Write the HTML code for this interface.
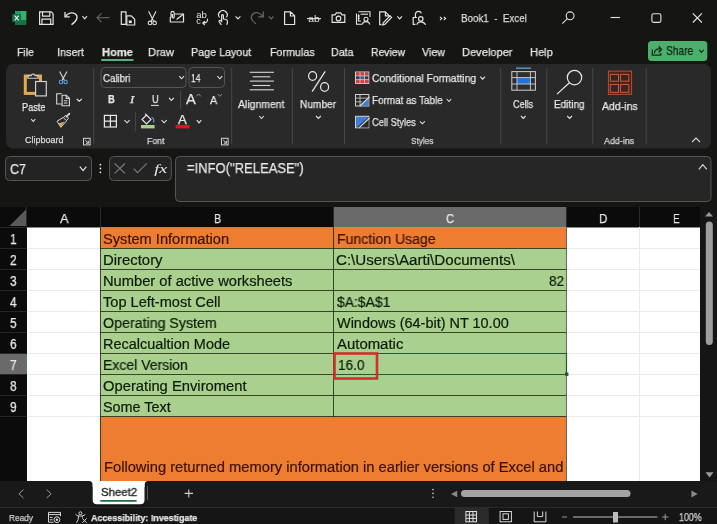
<!DOCTYPE html>
<html><head><meta charset="utf-8"><style>
html,body{margin:0;padding:0;width:717px;height:524px;overflow:hidden;background:#151513;}
body{position:relative;font-family:"Liberation Sans", sans-serif;}
svg.g{position:absolute;left:0;top:0;will-change:transform;}
.t{position:absolute;line-height:1;white-space:pre;transform-origin:0 0;will-change:transform;-webkit-text-stroke:0.25px currentColor;}
</style></head><body>
<svg class="g" width="717" height="524" viewBox="0 0 717 524">
<g>
<rect x="15" y="11" width="11.2" height="13.8" rx="0.8" fill="#1d8450"/>
<rect x="15" y="11" width="11.2" height="4.6" fill="#2a9a62"/>
<rect x="20.5" y="11" width="5.7" height="9.2" fill="#33b070"/>
<rect x="15" y="20.2" width="11.2" height="4.6" fill="#1b6e44"/>
<rect x="12.2" y="14" width="8.9" height="8" rx="0.8" fill="#17744a"/>
<path d="M14.7 15.6 L18.7 20.4 M18.7 15.6 L14.7 20.4" stroke="#e8f5ec" stroke-width="1.2"/>
</g>
<g fill="none" stroke="#e3e3e3" stroke-width="1.2"><path d="M39.6 11.8 H51.2 L53.1 13.7 V24.4 H39.6 Z"/><path d="M42.5 11.8 V16.2 H49.8 V11.8"/><path d="M42 24.4 V19.2 H50.7 V24.4"/></g>
<g fill="none" stroke="#e3e3e3" stroke-width="1.3"><path d="M65 12 V16.8 H69.8"/><path d="M65.3 16.6 C67.5 13.2 72 11.8 75 13.8 C78.3 16 77.8 20.5 71.5 24.6"/></g>
<path d="M82.5 16.2 L84.75 18.8 L87 16.2" fill="none" stroke="#e3e3e3" stroke-width="1.1"/>
<g fill="none" stroke="#6a6a6a" stroke-width="1.1"><path d="M97 17.7 H109.5"/><path d="M101.5 13.3 L97 17.7 L101.5 22.2"/></g>
<g fill="none" stroke="#e3e3e3" stroke-width="1.2"><path d="M121.3 11.8 H126 V24.4 H121.3 Z"/><path d="M126.8 15.8 H131.2 L134.7 19.3 V25 H126.8 Z"/></g><rect x="128.8" y="20.5" width="3" height="2.6" fill="#e3e3e3"/>
<g fill="none" stroke="#e3e3e3" stroke-width="1.1"><path d="M148.6 11.3 L153.6 21.2 M156 11.3 L151 21.2"/><circle cx="150" cy="22.9" r="1.8"/><circle cx="154.6" cy="22.9" r="1.8"/></g>
<g fill="none" stroke="#e3e3e3" stroke-width="1.2"><path d="M175 14 H183.5 V22 H170.3 V17"/><path d="M176.6 19.5 L183.2 14.2"/><path d="M171 17.5 V13 A1.6 1.6 0 0 1 174.2 13 V17 A0.9 0.9 0 0 1 172.4 17 V14"/></g>
<text x="196.3" y="17.6" font-family="Liberation Sans" font-size="8.4" fill="#e3e3e3" textLength="10.6" lengthAdjust="spacingAndGlyphs">ab</text><text x="196.2" y="24.2" font-family="Liberation Sans" font-size="9" fill="#e3e3e3">c</text><path d="M207.6 18.6 C207.8 21.6 206.2 23.1 202.8 23.1 M204.8 21.1 L202.7 23.1 L204.8 25" fill="none" stroke="#e3e3e3" stroke-width="1.1"/>
<g fill="none" stroke="#e3e3e3" stroke-width="1.2"><path d="M219.5 17.5 A4.3 4.3 0 1 1 226.3 17.5"/><path d="M221.4 24.8 L219.2 21.8 C218.6 20.8 219.8 19.8 220.8 20.7 L221.6 21.4 V15.5 C221.6 14.3 223.4 14.3 223.4 15.5 V19 C225.5 19 227.4 19.6 227.4 21.3 V23 L226.6 24.8"/></g>
<path d="M235.6 16.4 L238.0 18.9 L240.4 16.4" fill="none" stroke="#e3e3e3" stroke-width="1.1"/>
<g fill="none" stroke="#6a6a6a" stroke-width="1.2"><path d="M263.3 11.5 V16.8 H258.3"/><path d="M263 16.5 C260.8 13 256 11.5 253.2 13.8 C250 16.3 250.6 20.3 256 23.8"/></g>
<path d="M268.8 16.4 L271.15 18.9 L273.5 16.4" fill="none" stroke="#6a6a6a" stroke-width="1.1"/>
<path d="M284.6 11.8 H290.6 L294.6 15.8 V24.5 H284.6 Z M290.4 11.8 V16 H294.6" fill="none" stroke="#e3e3e3" stroke-width="1.2"/>
<text x="308.2" y="22.2" font-family="Liberation Sans" font-size="9.6" fill="#e3e3e3" textLength="11.5" lengthAdjust="spacingAndGlyphs">ab</text><path d="M307 18.6 H321" stroke="#e3e3e3" stroke-width="1.1"/>
<g fill="none" stroke="#e3e3e3" stroke-width="1.2"><path d="M332.1 14.8 H335 L336.4 12.9 H340.6 L342 14.8 H344.8 V22.4 H332.1 Z"/><circle cx="338.5" cy="18.5" r="2.3"/></g>
<g fill="none" stroke="#e3e3e3" stroke-width="1.1"><path d="M356.5 13.5 V24.3 H362"/><path d="M358.5 11.8 H370 V17"/><path d="M358.5 14.2 V21 H361"/><path d="M360.6 14.2 H368"/><circle cx="366" cy="19.3" r="2"/><path d="M362.3 24.5 C362.6 22.6 364 21.6 366 21.6 C368 21.6 369.5 22.6 369.8 24.5"/></g><path d="M357.8 16 H360 M357.8 18.2 H360" stroke="#e3e3e3" stroke-width="1"/>
<g fill="none" stroke="#e3e3e3" stroke-width="1.2"><path d="M381.5 24.6 H379.7 V11.8 H385.3 L389.2 15.7 V17"/><path d="M385.4 11.8 V15.8 H389.3"/><path d="M391.6 17.4 L384.8 24.5 L382.7 25 L383.3 22.9 L390.1 15.9 Z"/></g>
<path d="M397.3 16.4 L399.65 18.9 L402 16.4" fill="none" stroke="#e3e3e3" stroke-width="1.1"/>
<g fill="none" stroke="#e3e3e3" stroke-width="1.2"><path d="M415.4 17.3 V14.4 A3.1 3.1 0 0 1 421.4 13.4"/><path d="M417 17.5 H413.2 V24.4 H415.5"/><circle cx="420.8" cy="18.9" r="2.2"/><path d="M417 24.8 C417.2 22.9 418.7 21.8 420.8 21.8 C422.9 21.8 424.5 22.9 425.6 24.8"/></g>
<path d="M440 17 L441.8 18.6 L440 20.2 M443.8 17 L445.6 18.6 L443.8 20.2" fill="none" stroke="#e3e3e3" stroke-width="1.1"/>
<g fill="none" stroke="#e3e3e3" stroke-width="1.1"><circle cx="570.1" cy="15.8" r="3.9"/><path d="M567.3 18.7 L562.3 23.6"/></g>
<path d="M610.6 17.5 H620" stroke="#e3e3e3" stroke-width="1.1"/>
<rect x="651.9" y="13.8" width="9" height="8.6" rx="1.6" fill="none" stroke="#e3e3e3" stroke-width="1.1"/>
<path d="M692.8 13.4 L701.9 22.5 M701.9 13.4 L692.8 22.5" stroke="#e3e3e3" stroke-width="1.1"/>
<rect x="101" y="59" width="32.7" height="1.9" rx="0.9" fill="#5cb07c"/>
<rect x="648" y="41" width="59.3" height="20" rx="3.5" fill="#4caf6c"/>
<g fill="none" stroke="#0d2a16" stroke-width="1.2"><path d="M652.3 49.5 V55.2 H660.8 V53"/><path d="M654.3 53.4 C654.7 50.2 656.6 48.8 659.3 48.8 V46.9 L661.6 49.5 L659.3 52 V50.3"/></g>
<path d="M699.2 49.8 L701.4000000000001 52.4 L703.6 49.8" fill="none" stroke="#0d2a16" stroke-width="1.1"/>
<rect x="6" y="64" width="705" height="84.5" rx="7" fill="#292929"/>
<path d="M93.7 68 V144" stroke="#474747" stroke-width="1"/>
<path d="M231.7 68 V144" stroke="#474747" stroke-width="1"/>
<path d="M292.4 68 V144" stroke="#474747" stroke-width="1"/>
<path d="M344.5 68 V144" stroke="#474747" stroke-width="1"/>
<path d="M500.7 68 V144" stroke="#474747" stroke-width="1"/>
<path d="M546.9 68 V144" stroke="#474747" stroke-width="1"/>
<path d="M592.7 68 V144" stroke="#474747" stroke-width="1"/>
<path d="M646.2 68 V144" stroke="#474747" stroke-width="1"/>
<g><rect x="25.3" y="76" width="15.2" height="17.4" fill="none" stroke="#e3a94a" stroke-width="3"/><path d="M27.8 78.2 L28.4 75.6 H31.1 A2.1 2.1 0 0 1 35.1 75.6 H37.7 L38.2 78.2 Z" fill="#292929" stroke="#cfcfcf" stroke-width="1.1"/><rect x="35.6" y="81.5" width="10.7" height="14.4" fill="#292929" stroke="#d0d0d0" stroke-width="1.2"/></g>
<path d="M31.2 119.2 L33.25 121.5 L35.3 119.2" fill="none" stroke="#e3e3e3" stroke-width="1.1"/>
<g fill="none" stroke-width="1.1"><path d="M59.6 71.6 L64.5 80.6 M67 71.6 L62 80.6" stroke="#d8d8d8"/><circle cx="61" cy="82" r="1.7" stroke="#5a9fd8"/><circle cx="65.6" cy="82" r="1.7" stroke="#5a9fd8"/></g>
<g fill="none" stroke="#d8d8d8" stroke-width="1.1"><path d="M61.8 104 H56.7 V93.8 H61.8"/><path d="M62.1 95.2 H66.4 L69.4 98.2 V105.8 H62.1 Z"/><path d="M66.2 95.2 V98.4 H69.4"/><path d="M63.9 100.8 H67.4 M63.9 103 H67.4"/></g>
<path d="M76.7 99 L79.25 101.2 L81.8 99" fill="none" stroke="#e3e3e3" stroke-width="1.1"/>
<g><path d="M57 121.3 L63.2 117.4 L66.6 120.8 L60.9 127.3 Z" fill="#292929" stroke="#dcdcdc" stroke-width="1"/><path d="M58.6 123.4 L64.7 121.6 L60.9 126.4 Z" fill="#e8b24a"/><path d="M63.4 117.6 L65.6 115.4 L68.6 118.4 L66.4 120.6" fill="none" stroke="#dcdcdc" stroke-width="1"/><path d="M66.4 116.6 L69.4 113.6" stroke="#dcdcdc" stroke-width="1.6" stroke-linecap="round"/></g>
<g fill="none" stroke="#d4d4d4" stroke-width="1"><rect x="83.5" y="138.3" width="6.6" height="6.6"/><path d="M85.2 140.0 L88.4 143.20000000000002 M88.4 140.8 V143.20000000000002 H86"/></g>
<rect x="101" y="67.5" width="85" height="20" rx="4" fill="none" stroke="#555" stroke-width="1"/>
<rect x="189" y="67.5" width="35.5" height="20" rx="4" fill="none" stroke="#555" stroke-width="1"/>
<path d="M179.2 76.2 L181.6 78.8 L184 76.2" fill="none" stroke="#e3e3e3" stroke-width="1.1"/>
<path d="M217.4 76.2 L219.8 78.8 L222.2 76.2" fill="none" stroke="#e3e3e3" stroke-width="1.1"/>
<path d="M151 105.4 H158.8" stroke="#e8e8e8" stroke-width="1"/>
<path d="M169 97.8 L171.4 100.4 L173.8 97.8" fill="none" stroke="#e3e3e3" stroke-width="1.1"/>
<path d="M180.5 90.5 V109" stroke="#474747" stroke-width="1"/>
<path d="M196.4 96.3 L198.6 94 L200.8 96.3" fill="none" stroke="#5a9fd8" stroke-width="1"/>
<path d="M217.6 94 L219.8 96.3 L222 94" fill="none" stroke="#5a9fd8" stroke-width="1"/>
<g fill="none" stroke="#e8e8e8" stroke-width="1.2"><rect x="104.4" y="115.4" width="12" height="11.6"/><path d="M110.4 115.4 V127 M104.4 121.2 H116.4"/></g>
<path d="M124.5 120.2 L127.05 122.8 L129.6 120.2" fill="none" stroke="#e3e3e3" stroke-width="1.1"/>
<path d="M135.6 112 V131.4" stroke="#474747" stroke-width="1"/>
<g fill="none" stroke="#e8e8e8" stroke-width="1.1"><path d="M142 119.5 L146.5 115 L151 119.5 L146.5 124 Z"/><path d="M145 113.6 L147.3 115.8"/></g><path d="M151.5 117.3 C153.5 118 154.6 120.5 153.4 122.3" fill="none" stroke="#5a9fd8" stroke-width="1.2"/>
<rect x="141" y="125" width="13.6" height="3.4" fill="#a9d08e"/>
<path d="M161.6 120.2 L164.14999999999998 122.8 L166.7 120.2" fill="none" stroke="#e3e3e3" stroke-width="1.1"/>
<rect x="175.6" y="125" width="14" height="3.4" fill="#e0141a"/>
<path d="M196.8 120.2 L199.05 122.8 L201.3 120.2" fill="none" stroke="#e3e3e3" stroke-width="1.1"/>
<g fill="none" stroke="#d4d4d4" stroke-width="1"><rect x="221.5" y="138.3" width="6.6" height="6.6"/><path d="M223.2 140.0 L226.4 143.20000000000002 M226.4 140.8 V143.20000000000002 H224"/></g>
<path d="M249.8 72.3 H273.9" stroke="#d8d8d8" stroke-width="1.1"/>
<path d="M252.6 76.8 H270.2" stroke="#d8d8d8" stroke-width="1.1"/>
<path d="M249.8 81.1 H273.9" stroke="#d8d8d8" stroke-width="1.1"/>
<path d="M252.6 85.5 H270.2" stroke="#d8d8d8" stroke-width="1.1"/>
<path d="M249.8 89.8 H273.9" stroke="#d8d8d8" stroke-width="1.1"/>
<path d="M259.2 116 L261.5 118.5 L263.8 116" fill="none" stroke="#e3e3e3" stroke-width="1.1"/>
<g fill="none" stroke="#e8e8e8" stroke-width="1.2"><ellipse cx="312.6" cy="76" rx="4" ry="4.4"/><ellipse cx="324.6" cy="87" rx="4" ry="4.4"/><path d="M325.2 71.4 L312.1 91.6"/></g>
<path d="M316 116 L318.4 118.5 L320.8 116" fill="none" stroke="#e3e3e3" stroke-width="1.1"/>
<g><rect x="355.5" y="72" width="13.3" height="11.4" fill="#3a3a3a" stroke="#cfcfcf" stroke-width="1"/><rect x="356" y="72.5" width="12.3" height="3.4" fill="#d04040"/><rect x="356" y="79.6" width="12.3" height="3.4" fill="#d04040"/><rect x="360.3" y="75.9" width="4" height="3.7" fill="#3a5fa8"/><path d="M360 72 V83.4 M364.5 72 V83.4 M355.5 75.9 H368.8 M355.5 79.6 H368.8" stroke="#cfcfcf" stroke-width="0.8"/></g>
<path d="M480.3 76.6 L482.65 79.1 L485 76.6" fill="none" stroke="#e3e3e3" stroke-width="1.1"/>
<g><rect x="355.5" y="94.5" width="13.3" height="11.5" fill="none" stroke="#cfcfcf" stroke-width="1"/><path d="M355.5 98.1 H368.8 M355.5 101.8 H362 M360 94.5 V106.0" stroke="#cfcfcf" stroke-width="0.8"/><path d="M360.5 105.7 L368.6 98.0 V105.7 Z" fill="#3f7fd0"/><path d="M359.8 106.0 L369.5 96.8" stroke="#e0e0e0" stroke-width="1.1"/></g>
<path d="M446.8 99 L449.0 101.5 L451.2 99" fill="none" stroke="#e3e3e3" stroke-width="1.1"/>
<g><rect x="355.5" y="116.3" width="13.3" height="11.5" fill="#3f7fd0" stroke="#cfcfcf" stroke-width="1"/><path d="M357 127.5 L368.6 117 V127.5 Z" fill="#2a2a2a"/><path d="M359 127.8 L369.5 118" stroke="#e0e0e0" stroke-width="1.1"/></g>
<path d="M420 121.3 L422.4 123.8 L424.8 121.3" fill="none" stroke="#e3e3e3" stroke-width="1.1"/>
<g><path d="M516 68.2 H531" stroke="#5a9fd8" stroke-width="1.4"/><rect x="511.8" y="71.6" width="23.6" height="18.6" fill="#2f2f2f" stroke="#cfcfcf" stroke-width="1"/><rect x="517" y="77.6" width="13.4" height="6.4" fill="#1e73d8"/><path d="M511.8 77.6 H535.4 M511.8 84 H535.4 M517 71.6 V90.2 M530.4 71.6 V90.2" stroke="#cfcfcf" stroke-width="0.9"/></g>
<path d="M521 116 L523.3 118.4 L525.6 116" fill="none" stroke="#e3e3e3" stroke-width="1.1"/>
<g fill="none" stroke="#e8e8e8" stroke-width="1.2"><circle cx="574.5" cy="77.6" r="7.2"/><path d="M569.4 82.7 L557 94.1"/></g>
<path d="M567.2 116 L569.6 118.4 L572 116" fill="none" stroke="#e3e3e3" stroke-width="1.1"/>
<g stroke-width="1"><rect x="608.4" y="71.1" width="23.2" height="23.2" fill="#5a1c12" stroke="#b8502e"/><rect x="610.3" y="74.4" width="8.2" height="6.8" fill="#3a2420" stroke="#c2603c"/><rect x="620.6" y="74.4" width="8.2" height="6.8" fill="#3a2420" stroke="#c2603c"/><rect x="610.3" y="84.5" width="8.2" height="7.8" fill="#3a2420" stroke="#c2603c"/><rect x="620.6" y="84.5" width="8.2" height="7.8" fill="#3a2420" stroke="#c2603c"/></g>
<path d="M692 142 L696.0 138 L700 142" fill="none" stroke="#d8d8d8" stroke-width="1.1"/>
<rect x="5.5" y="156.5" width="86" height="24" rx="4" fill="#232323" stroke="#555" stroke-width="1"/>
<path d="M79.8 166.6 L83.1 170.6 L86.4 166.6" fill="none" stroke="#e3e3e3" stroke-width="1.2"/>
<g fill="#e8e8e8"><circle cx="100.4" cy="164.7" r="0.9"/><circle cx="100.4" cy="168.5" r="0.9"/><circle cx="100.4" cy="172.3" r="0.9"/></g>
<rect x="109.5" y="156.5" width="61.8" height="24" rx="4" fill="#232323" stroke="#555" stroke-width="1"/>
<g fill="none" stroke="#7a7a7a" stroke-width="1.1"><path d="M114.6 163.5 L125 173.4 M125 163.5 L114.6 173.4"/><path d="M133.8 168.6 L137.5 172.6 L146.8 163.4"/></g>
<text x="154.2" y="172.8" font-family="Liberation Serif" font-style="italic" font-size="12.5" fill="#e8e8e8" textLength="13" lengthAdjust="spacingAndGlyphs">fx</text>
<rect x="175.5" y="156.5" width="535.5" height="45" rx="4" fill="#262626" stroke="#555" stroke-width="1"/>
<path d="M698.8 169.4 L702.8 164.6 L706.8 169.4" fill="none" stroke="#d8d8d8" stroke-width="1.1"/>
<rect x="0" y="207" width="700" height="20.5" fill="#0b0b0b"/>
<rect x="333.5" y="207" width="233.5" height="20.5" fill="#6a6a6a"/>
<path d="M333.5 226.5 H567" stroke="#4f7f56" stroke-width="1"/>
<path d="M9.5 226 L26 209.6 V226 Z" fill="#5a5a5a"/>
<rect x="0" y="227" width="27" height="254" fill="#0b0b0b"/>
<rect x="0" y="354" width="27" height="21" fill="#6a6a6a"/>
<path d="M26.5 354 V375" stroke="#4f7f56" stroke-width="1"/>
<path d="M0 227.5 H27" stroke="#262626" stroke-width="1"/>
<path d="M0 248.5 H27" stroke="#262626" stroke-width="1"/>
<path d="M0 269.5 H27" stroke="#262626" stroke-width="1"/>
<path d="M0 290.5 H27" stroke="#262626" stroke-width="1"/>
<path d="M0 311.5 H27" stroke="#262626" stroke-width="1"/>
<path d="M0 332.5 H27" stroke="#262626" stroke-width="1"/>
<path d="M0 353.5 H27" stroke="#262626" stroke-width="1"/>
<path d="M0 374.5 H27" stroke="#262626" stroke-width="1"/>
<path d="M0 395.5 H27" stroke="#262626" stroke-width="1"/>
<path d="M0 416.5 H27" stroke="#262626" stroke-width="1"/>
<path d="M26.5 207 V227" stroke="#2a2a2a" stroke-width="1"/>
<path d="M100.5 207 V227" stroke="#2a2a2a" stroke-width="1"/>
<path d="M333.5 207 V227" stroke="#2a2a2a" stroke-width="1"/>
<path d="M566.5 207 V227" stroke="#2a2a2a" stroke-width="1"/>
<path d="M639.5 207 V227" stroke="#2a2a2a" stroke-width="1"/>
<rect x="27" y="227.5" width="673" height="253.5" fill="#ffffff"/>
<path d="M27 248.5 H700" stroke="#eaeaea" stroke-width="1"/>
<path d="M27 269.5 H700" stroke="#eaeaea" stroke-width="1"/>
<path d="M27 290.5 H700" stroke="#eaeaea" stroke-width="1"/>
<path d="M27 311.5 H700" stroke="#eaeaea" stroke-width="1"/>
<path d="M27 332.5 H700" stroke="#eaeaea" stroke-width="1"/>
<path d="M27 353.5 H700" stroke="#eaeaea" stroke-width="1"/>
<path d="M27 374.5 H700" stroke="#eaeaea" stroke-width="1"/>
<path d="M27 395.5 H700" stroke="#eaeaea" stroke-width="1"/>
<path d="M27 416.5 H700" stroke="#eaeaea" stroke-width="1"/>
<path d="M100.5 227 V481" stroke="#eaeaea" stroke-width="1"/>
<path d="M333.5 227 V481" stroke="#eaeaea" stroke-width="1"/>
<path d="M566.5 227 V481" stroke="#eaeaea" stroke-width="1"/>
<path d="M639.5 227 V481" stroke="#eaeaea" stroke-width="1"/>
<rect x="100.5" y="227.5" width="466" height="21" fill="#ed7d31"/>
<rect x="100.5" y="248.5" width="466" height="168" fill="#a9d08e"/>
<rect x="100.5" y="416.5" width="466" height="64.5" fill="#ed7d31"/>
<path d="M100.5 248.5 H566.5" stroke="rgba(10,20,0,0.72)" stroke-width="1"/>
<path d="M100.5 269.5 H566.5" stroke="rgba(10,20,0,0.72)" stroke-width="1"/>
<path d="M100.5 290.5 H566.5" stroke="rgba(10,20,0,0.72)" stroke-width="1"/>
<path d="M100.5 311.5 H566.5" stroke="rgba(10,20,0,0.72)" stroke-width="1"/>
<path d="M100.5 332.5 H566.5" stroke="rgba(10,20,0,0.72)" stroke-width="1"/>
<path d="M100.5 353.5 H566.5" stroke="rgba(10,20,0,0.72)" stroke-width="1"/>
<path d="M100.5 374.5 H566.5" stroke="rgba(10,20,0,0.72)" stroke-width="1"/>
<path d="M100.5 395.5 H566.5" stroke="rgba(10,20,0,0.72)" stroke-width="1"/>
<path d="M100.5 416.5 H566.5" stroke="rgba(10,20,0,0.72)" stroke-width="1"/>
<path d="M100.5 227 V481" stroke="rgba(10,10,0,0.72)" stroke-width="1"/>
<path d="M333.5 227 V417" stroke="rgba(10,30,0,0.75)" stroke-width="1"/>
<path d="M566.5 227 V481" stroke="rgba(70,70,70,0.75)" stroke-width="1"/>
<path d="M333.5 353.5 H566.5 V374.5 H333.5" fill="none" stroke="#1f5c36" stroke-width="1.2"/>
<rect x="565" y="372.5" width="3.4" height="3.4" fill="#1f5c36"/>
<rect x="334.5" y="353.5" width="42.5" height="25" fill="none" stroke="#d0302a" stroke-width="2.6"/>
<rect x="700" y="206.5" width="17" height="274.5" fill="#151515"/>
<path d="M705 216.5 L709 212 L713 216.5 Z" fill="#9a9a9a"/>
<rect x="705.8" y="221.6" width="7" height="123.4" rx="3.5" fill="#9e9e9e"/>
<path d="M705.5 472.2 L709.5 477.6 L713.5 472.2 Z" fill="#9a9a9a"/>
<rect x="86" y="481" width="64" height="6" fill="#ffffff"/>
<path d="M0 481 H88.7 A4 4 0 0 1 92.7 485 V507.5 H0 Z" fill="#19191a"/>
<path d="M144.5 485 A4 4 0 0 1 148.5 481 H717 V507.5 H144.5 Z" fill="#19191a"/>
<path d="M23.5 489.6 L18.9 493.8 L23.5 498" fill="none" stroke="#9a9a9a" stroke-width="1"/>
<path d="M46.6 489.6 L51.2 493.8 L46.6 498" fill="none" stroke="#9a9a9a" stroke-width="1"/>
<path d="M92.7 481 H144.5 V500 Q144.5 504.2 140.3 504.2 H96.9 Q92.7 504.2 92.7 500 Z" fill="#ffffff"/>
<rect x="100.3" y="500" width="36.3" height="1.8" fill="#217346"/>
<path d="M147.5 486 V500" stroke="#5a5a5a" stroke-width="1"/>
<path d="M184.6 493.4 H193 M188.8 489.4 V497.4" stroke="#cfcfcf" stroke-width="1.1"/>
<g fill="#cfcfcf"><circle cx="433" cy="489.6" r="0.8"/><circle cx="433" cy="493.4" r="0.8"/><circle cx="433" cy="497.2" r="0.8"/></g>
<path d="M457.2 490.7 L451 494 L457.2 497.3 Z" fill="#8a8a8a"/>
<rect x="461" y="490" width="169.5" height="7" rx="3.5" fill="#a3a3a3"/>
<path d="M691.4 490.4 L697.6 494 L691.4 497.4 Z" fill="#8a8a8a"/>
<rect x="0" y="507.5" width="717" height="16.5" fill="#151515"/>
<path d="M0 507.5 H717" stroke="#2a2a2a" stroke-width="1"/>
<g fill="none" stroke="#d8d8d8" stroke-width="1"><path d="M53.5 522.2 H48.5 V512.4 H60.5 V516.2 M48.5 514.6 H60.5 M49.8 517.4 H52.6 M49.8 519.8 H52.6"/><circle cx="56.9" cy="519.7" r="2.9"/></g><circle cx="56.9" cy="519.7" r="1.2" fill="#d8d8d8"/>
<g fill="none" stroke="#d8d8d8" stroke-width="1"><circle cx="80.4" cy="513.3" r="1.5"/><path d="M75.5 514.4 C77 515.6 78.6 516.1 80.4 516.1 C82.2 516.1 83.8 515.6 85.3 514.4"/><path d="M78.6 516 L78.1 519.6 L76.6 522.8 M82.2 516 L82.4 517.6"/><path d="M82.4 518.4 L86.6 522.8 M86.6 518.4 L82.4 522.8"/></g>
<rect x="454.6" y="508" width="34.2" height="16" fill="#2a2a2a"/>
<g fill="none" stroke="#e0e0e0" stroke-width="1"><rect x="465.9" y="511.5" width="10.6" height="10.3"/><path d="M469.4 511.5 V521.8 M473 511.5 V521.8 M465.9 515 H476.5 M465.9 518.4 H476.5"/></g>
<g fill="none" stroke="#d8d8d8" stroke-width="1"><rect x="500.1" y="511.5" width="11.3" height="10.3"/><rect x="503" y="513.8" width="5.4" height="5.6"/></g>
<g fill="none" stroke="#d8d8d8" stroke-width="1"><path d="M534.2 511.5 V521.8 H545.9 V511.5"/><path d="M537.4 511.5 V516.6 H542.7 V511.5"/></g>
<path d="M562 517 H567" stroke="#9a9a9a" stroke-width="1"/>
<path d="M573 517 H657.4" stroke="#bdbdbd" stroke-width="1"/>
<rect x="613" y="512" width="5" height="10.5" fill="#bdbdbd"/>
<path d="M662 517 H668.4 M665.2 513.8 V520.2" stroke="#9a9a9a" stroke-width="1"/>
</svg>
<span class="t" style="left:460.60px;top:12.00px;font-size:11.63px;color:#dcdcdc;transform:scaleX(0.841);white-space:pre;">Book1  -  Excel</span>
<span class="t" style="left:17.00px;top:46.00px;font-size:11.63px;color:#e8e8e8;transform:scaleX(0.901);">File</span>
<span class="t" style="left:56.50px;top:46.00px;font-size:11.63px;color:#e8e8e8;transform:scaleX(0.932);">Insert</span>
<span class="t" style="left:101.70px;top:46.00px;font-size:11.63px;color:#e8e8e8;font-weight:700;transform:scaleX(0.957);">Home</span>
<span class="t" style="left:148.00px;top:46.00px;font-size:11.63px;color:#e8e8e8;transform:scaleX(0.957);">Draw</span>
<span class="t" style="left:191.30px;top:46.00px;font-size:11.63px;color:#e8e8e8;transform:scaleX(0.924);">Page Layout</span>
<span class="t" style="left:269.60px;top:46.00px;font-size:11.63px;color:#e8e8e8;transform:scaleX(0.922);">Formulas</span>
<span class="t" style="left:331.40px;top:46.00px;font-size:11.63px;color:#e8e8e8;transform:scaleX(0.920);">Data</span>
<span class="t" style="left:370.60px;top:46.00px;font-size:11.63px;color:#e8e8e8;transform:scaleX(0.891);">Review</span>
<span class="t" style="left:421.90px;top:46.00px;font-size:11.63px;color:#e8e8e8;transform:scaleX(0.923);">View</span>
<span class="t" style="left:462.40px;top:46.00px;font-size:11.63px;color:#e8e8e8;transform:scaleX(0.953);">Developer</span>
<span class="t" style="left:530.20px;top:46.00px;font-size:11.63px;color:#e8e8e8;transform:scaleX(0.953);">Help</span>
<span class="t" style="left:666.20px;top:46.00px;font-size:11.92px;color:#0d2a16;transform:scaleX(0.852);">Share</span>
<span class="t" style="left:21.50px;top:102.00px;font-size:10.76px;color:#e8e8e8;transform:scaleX(0.854);">Paste</span>
<span class="t" style="left:24.80px;top:136.00px;font-size:8.87px;color:#d8d8d8;transform:scaleX(1.017);">Clipboard</span>
<span class="t" style="left:102.80px;top:73.00px;font-size:11.34px;color:#e8e8e8;transform:scaleX(0.852);">Calibri</span>
<span class="t" style="left:191.00px;top:73.00px;font-size:11.34px;color:#e8e8e8;transform:scaleX(0.753);">14</span>
<span class="t" style="left:107.70px;top:94.00px;font-size:10.90px;color:#e8e8e8;font-weight:700;transform:scaleX(0.863);">B</span>
<span class="t" style="left:130.26px;top:94.00px;font-size:10.90px;color:#e8e8e8;font-family:'Liberation Serif', serif;font-style:italic;transform:scaleX(1.166);">I</span>
<span class="t" style="left:151.50px;top:94.00px;font-size:10.90px;color:#e8e8e8;transform:scaleX(0.863);">U</span>
<span class="t" style="left:185.80px;top:92.00px;font-size:14.10px;color:#e8e8e8;transform:scaleX(1.041);">A</span>
<span class="t" style="left:209.80px;top:94.00px;font-size:11.63px;color:#e8e8e8;transform:scaleX(0.928);">A</span>
<span class="t" style="left:178.00px;top:114.00px;font-size:12.21px;color:#e8e8e8;transform:scaleX(1.080);">A</span>
<span class="t" style="left:146.80px;top:137.00px;font-size:9.30px;color:#d8d8d8;transform:scaleX(0.941);">Font</span>
<span class="t" style="left:238.40px;top:99.00px;font-size:10.61px;color:#e8e8e8;transform:scaleX(0.985);">Alignment</span>
<span class="t" style="left:300.30px;top:99.00px;font-size:10.61px;color:#e8e8e8;transform:scaleX(0.954);">Number</span>
<span class="t" style="left:372.40px;top:73.00px;font-size:11.48px;color:#e8e8e8;transform:scaleX(0.902);">Conditional Formatting</span>
<span class="t" style="left:372.40px;top:95.00px;font-size:11.34px;color:#e8e8e8;transform:scaleX(0.872);">Format as Table</span>
<span class="t" style="left:372.40px;top:117.00px;font-size:11.34px;color:#e8e8e8;transform:scaleX(0.820);">Cell Styles</span>
<span class="t" style="left:411.00px;top:136.00px;font-size:9.74px;color:#d8d8d8;transform:scaleX(0.841);">Styles</span>
<span class="t" style="left:513.40px;top:99.00px;font-size:10.61px;color:#e8e8e8;transform:scaleX(0.852);">Cells</span>
<span class="t" style="left:553.60px;top:99.00px;font-size:10.61px;color:#e8e8e8;transform:scaleX(0.943);">Editing</span>
<span class="t" style="left:601.60px;top:101.00px;font-size:11.34px;color:#e8e8e8;transform:scaleX(0.929);">Add-ins</span>
<span class="t" style="left:603.80px;top:137.00px;font-size:9.30px;color:#d8d8d8;transform:scaleX(0.958);">Add-ins</span>
<span class="t" style="left:9.80px;top:162.00px;font-size:14.54px;color:#e8e8e8;transform:scaleX(0.856);">C7</span>
<span class="t" style="left:186.70px;top:162.00px;font-size:13.95px;color:#e8e8e8;transform:scaleX(0.934);">=INFO("RELEASE")</span>
<span class="t" style="left:60.10px;top:212.00px;font-size:13.52px;color:#e8e8e8;transform:scaleX(0.953);">A</span>
<span class="t" style="left:213.50px;top:212.00px;font-size:13.52px;color:#e8e8e8;transform:scaleX(0.798);">B</span>
<span class="t" style="left:446.30px;top:212.00px;font-size:13.52px;color:#e8e8e8;transform:scaleX(0.829);">C</span>
<span class="t" style="left:599.40px;top:212.00px;font-size:13.52px;color:#e8e8e8;transform:scaleX(0.850);">D</span>
<span class="t" style="left:673.40px;top:212.00px;font-size:13.52px;color:#e8e8e8;transform:scaleX(0.731);">E</span>
<span class="t" style="left:9.50px;top:233.00px;font-size:13.95px;color:#e8e8e8;transform:scaleX(0.865);">1</span>
<span class="t" style="left:9.50px;top:254.00px;font-size:13.95px;color:#e8e8e8;transform:scaleX(0.865);">2</span>
<span class="t" style="left:9.50px;top:275.00px;font-size:13.95px;color:#e8e8e8;transform:scaleX(0.865);">3</span>
<span class="t" style="left:9.50px;top:296.00px;font-size:13.95px;color:#e8e8e8;transform:scaleX(0.865);">4</span>
<span class="t" style="left:9.50px;top:317.00px;font-size:13.95px;color:#e8e8e8;transform:scaleX(0.865);">5</span>
<span class="t" style="left:9.50px;top:338.00px;font-size:13.95px;color:#e8e8e8;transform:scaleX(0.865);">6</span>
<span class="t" style="left:9.50px;top:359.00px;font-size:13.95px;color:#e8e8e8;transform:scaleX(0.865);">7</span>
<span class="t" style="left:9.50px;top:380.00px;font-size:13.95px;color:#e8e8e8;transform:scaleX(0.865);">8</span>
<span class="t" style="left:9.50px;top:401.00px;font-size:13.95px;color:#e8e8e8;transform:scaleX(0.865);">9</span>
<span class="t" style="left:103.30px;top:232.00px;font-size:14.39px;color:#3d1208;transform:scaleX(1.018);-webkit-text-stroke:0.2px currentColor;">System Information</span>
<span class="t" style="left:336.70px;top:232.00px;font-size:14.39px;color:#3d1208;transform:scaleX(0.979);-webkit-text-stroke:0.2px currentColor;">Function Usage</span>
<span class="t" style="left:103.30px;top:253.00px;font-size:14.39px;color:#0c1c08;transform:scaleX(1.035);-webkit-text-stroke:0.2px currentColor;">Directory</span>
<span class="t" style="left:336.30px;top:253.00px;font-size:14.39px;color:#0c1c08;transform:scaleX(1.052);-webkit-text-stroke:0.2px currentColor;">C:\Users\Aarti\Documents\</span>
<span class="t" style="left:103.30px;top:274.00px;font-size:14.39px;color:#0c1c08;transform:scaleX(1.022);-webkit-text-stroke:0.2px currentColor;">Number of active worksheets</span>
<span class="t" style="left:549.20px;top:274.00px;font-size:14.39px;color:#0c1c08;transform:scaleX(0.943);-webkit-text-stroke:0.2px currentColor;">82</span>
<span class="t" style="left:103.20px;top:295.00px;font-size:14.39px;color:#0c1c08;transform:scaleX(1.014);-webkit-text-stroke:0.2px currentColor;">Top Left-most Cell</span>
<span class="t" style="left:336.60px;top:295.00px;font-size:14.39px;color:#0c1c08;transform:scaleX(0.967);-webkit-text-stroke:0.2px currentColor;">$A:$A$1</span>
<span class="t" style="left:103.20px;top:316.00px;font-size:14.39px;color:#0c1c08;transform:scaleX(0.989);-webkit-text-stroke:0.2px currentColor;">Operating System</span>
<span class="t" style="left:336.60px;top:316.00px;font-size:14.39px;color:#0c1c08;transform:scaleX(1.006);-webkit-text-stroke:0.2px currentColor;">Windows (64-bit) NT 10.00</span>
<span class="t" style="left:103.20px;top:337.00px;font-size:14.39px;color:#0c1c08;transform:scaleX(1.006);-webkit-text-stroke:0.2px currentColor;">Recalcualtion Mode</span>
<span class="t" style="left:336.60px;top:337.00px;font-size:14.39px;color:#0c1c08;transform:scaleX(1.038);-webkit-text-stroke:0.2px currentColor;">Automatic</span>
<span class="t" style="left:103.20px;top:358.00px;font-size:14.39px;color:#0c1c08;transform:scaleX(0.974);-webkit-text-stroke:0.2px currentColor;">Excel Version</span>
<span class="t" style="left:337.50px;top:358.00px;font-size:14.39px;color:#0c1c08;transform:scaleX(0.946);-webkit-text-stroke:0.2px currentColor;">16.0</span>
<span class="t" style="left:103.20px;top:379.00px;font-size:14.39px;color:#0c1c08;transform:scaleX(1.027);-webkit-text-stroke:0.2px currentColor;">Operating Enviroment</span>
<span class="t" style="left:103.20px;top:400.00px;font-size:14.39px;color:#0c1c08;-webkit-text-stroke:0.2px currentColor;">Some Text</span>
<span class="t" style="left:103.50px;top:460.00px;font-size:14.39px;color:#3d1208;transform:scaleX(1.023);-webkit-text-stroke:0.2px currentColor;">Following returned memory information in earlier versions of Excel and</span>
<span class="t" style="left:100.50px;top:486.00px;font-size:11.63px;color:#262626;transform:scaleX(0.979);-webkit-text-stroke:0.4px #262626;">Sheet2</span>
<span class="t" style="left:8.50px;top:513.00px;font-size:9.74px;color:#d0d0d0;transform:scaleX(0.853);">Ready</span>
<span class="t" style="left:90.70px;top:513.00px;font-size:9.59px;color:#e8e8e8;font-weight:700;transform:scaleX(0.929);">Accessibility: Investigate</span>
<span class="t" style="left:679.30px;top:513.00px;font-size:10.17px;color:#d0d0d0;transform:scaleX(0.869);">100%</span>
</body></html>
